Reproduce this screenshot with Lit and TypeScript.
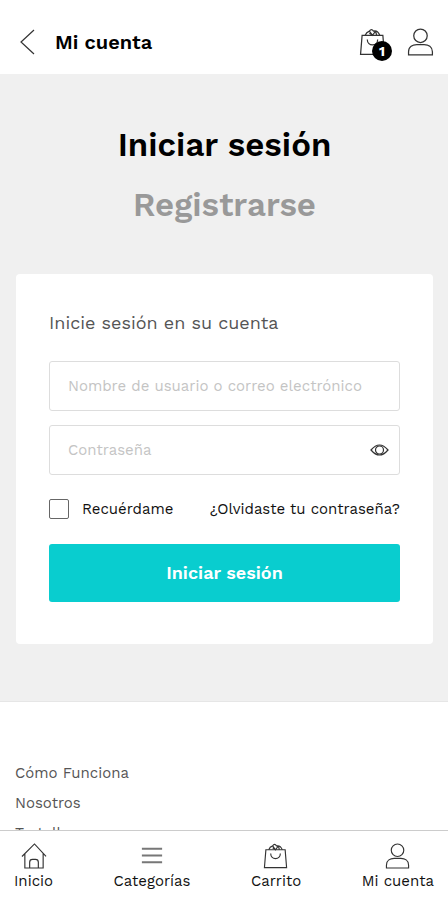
import { LitElement, html, css, svg } from "lit";
import { customElement, state } from "lit/decorators.js";

const bag = svg`<path d="M3 7h20l1.500 18.500h-23z"/><path d="M8 11c0 7 10 7 10 0M6 7q1-3 4-4 2-3 4 0 4-1 6 4M10 3l3 4 3-4M13 7l-3-2M16 3l1 4"/>`;
const user = svg`<circle cx="13" cy="7.500" r="6.500"/><path d="M1.500 26v-3c0-5 4-7 8-7h7c4 0 8 2 8 7v3z"/>`;
const home = svg`<path d="M1 14 14 1l12 13M4 11v15h19V11M9 26v-6q0-3 3-3h3q3 0 3 3v6"/>`;
const menu = svg`<path stroke-width="2" stroke="#777" d="M3 6h21M3 13h21M3 20h21"/>`;

@customElement("app-root")
export class AppRoot extends LitElement {
  @state() private visible = false;

  static styles = css`
    :host {
      display: flex;
      flex-direction: column;
      height: 100vh;
      background: #fff;
      color: #111;
      font-family: "Work Sans", Inter, sans-serif;
      font-size: 15px;
      line-height: 20px;
    }
    * { box-sizing: border-box; }
    a { color: inherit; text-decoration: none; }
    button { font: inherit; border: 0; padding: 0; background: none; color: inherit; cursor: pointer; }
    svg { display: block; fill: none; stroke: #333; stroke-width: 1.2; flex: none; }
    h1, h2, p { margin: 0; }
    header {
      display: flex;
      align-items: center;
      height: 74px;
      padding: 10px 13px 0 20px;
      flex: none;
    }
    .title { font-size: 20px; line-height: 24px; font-weight: 600; margin-left: 20px; flex: 1; color: #000; }
    .cart { position: relative; margin-right: 20px; }
    .badge {
      position: absolute;
      right: -5px;
      bottom: -5px;
      width: 20px;
      height: 20px;
      border-radius: 50%;
      background: #000;
      color: #fff;
      font-size: 14px;
      font-weight: 700;
      text-align: center;
    }
    main { flex: 1; min-height: 0; overflow-y: auto; scrollbar-width: none; }
    .account { background: #f0f0f0; padding: 51px 15px 57px 16px; border-bottom: 1px solid #e6e6e6; }
    .tabs { display: flex; flex-direction: column; align-items: center; gap: 20px; margin-bottom: 49px; }
    .tab { font-size: 33px; line-height: 40px; font-weight: 600; color: #999; }
    .tab.on { color: #000; }
    .card { background: #fff; border-radius: 4px; padding: 36px 33px 42px; display: flex; flex-direction: column; }
    .intro { font-size: 18px; line-height: 26px; font-weight: 400; color: #555; margin-bottom: 25px; }
    .field {
      display: flex;
      align-items: center;
      height: 50px;
      padding: 0 10px 0 18px;
      border: 1px solid #ddd;
      border-radius: 3px;
      margin-bottom: 14px;
    }
    .field input { flex: 1; min-width: 0; border: 0; outline: 0; padding: 0; background: none; font: inherit; color: #333; }
    .field input::placeholder { color: #c4c4c4; opacity: 1; }
    .options { display: flex; justify-content: space-between; align-items: center; height: 40px; margin-bottom: 15px; }
    .remember { display: flex; align-items: center; gap: 13px; }
    .remember input { appearance: none; width: 20px; height: 20px; margin: 0; border: 1px solid #666; border-radius: 2px; background: #fff; }
    .remember input:checked { background: #09cdcf; }
    .submit { height: 58px; border-radius: 3px; background: #09cdcf; color: #fff; font-size: 18px; font-weight: 600; }
    .links { display: flex; flex-direction: column; align-items: flex-start; gap: 10px; padding: 61px 15px; color: #555; }
    nav {
      display: flex;
      justify-content: space-between;
      height: 70px;
      padding: 12px 14px 0;
      border-top: 1px solid #ccc;
      flex: none;
    }
    nav a { display: flex; flex-direction: column; align-items: center; gap: 2px; }
  `;

  private icon(shape: unknown, size = 26) {
    return html`<svg width=${size} height=${size} viewBox="0 0 27 27" aria-hidden="true">${shape}</svg>`;
  }

  render() {
    return html`
      <header>
        <button aria-label="Volver">
          <svg width="15" height="26" viewBox="0 0 15 26"><path d="M14 1 1 13l13 12" /></svg>
        </button>
        <h1 class="title">Mi cuenta</h1>
        <a class="cart" href="#carrito" aria-label="Carrito">${this.icon(bag, 28)}<span class="badge">1</span></a>
        <a href="#cuenta" aria-label="Mi cuenta">${this.icon(user, 28)}</a>
      </header>
      <main>
        <section class="account">
          <div class="tabs">
            <button class="tab on">Iniciar sesión</button>
            <button class="tab">Registrarse</button>
          </div>
          <form class="card" @submit=${(e: Event) => e.preventDefault()}>
            <h2 class="intro">Inicie sesión en su cuenta</h2>
            <div class="field">
              <input type="text" aria-label="Nombre de usuario o correo electrónico" placeholder="Nombre de usuario o correo electrónico" />
            </div>
            <div class="field">
              <input type=${this.visible ? "text" : "password"} aria-label="Contraseña" placeholder="Contraseña" />
              <button type="button" aria-label="Mostrar contraseña" @click=${() => (this.visible = !this.visible)}>
                <svg width="19" height="12" viewBox="0 0 19 12"><path d="M1 6Q9.500-4 18 6 9.500 16 1 6z" /><circle cx="9.500" cy="6" r="4" /></svg>
              </button>
            </div>
            <div class="options">
              <label class="remember"><input type="checkbox" />Recuérdame</label>
              <a href="#recuperar">¿Olvidaste tu contraseña?</a>
            </div>
            <button class="submit">Iniciar sesión</button>
          </form>
        </section>
        <div class="links">
          <a href="#como-funciona">Cómo Funciona</a>
          <a href="#nosotros">Nosotros</a>
          <a href="#tu-talla">Tu talla</a>
        </div>
      </main>
      <nav>
        <a href="#inicio">${this.icon(home)}Inicio</a>
        <a href="#categorias">${this.icon(menu)}Categorías</a>
        <a href="#carrito">${this.icon(bag)}Carrito</a>
        <a href="#cuenta">${this.icon(user)}Mi cuenta</a>
      </nav>
    `;
  }
}
